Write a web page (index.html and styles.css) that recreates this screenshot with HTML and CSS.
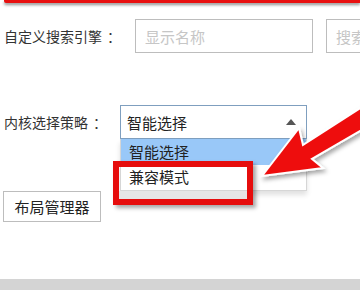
FILE: index.html
```html
<!DOCTYPE html>
<html lang="zh-CN">
<head>
  <meta charset="UTF-8">
  <title>内核选择</title>
  <link rel="stylesheet" href="styles.css">
</head>
<body>

  <div class="mark-top"></div>

  <div class="form">
    <div class="row">
      <label class="label label-engine">自定义搜索引擎<span class="colon">：</span></label>
      <input class="field field-name" type="text" placeholder="显示名称">
      <input class="field field-url" type="text" placeholder="搜索地址">
    </div>

    <div class="row row-kernel">
      <label class="label label-kernel">内核选择策略<span class="colon">：</span></label>
      <div class="select-wrap">
        <div class="select">
          <span>智能选择</span>
          <span class="caret"></span>
        </div>
        <ul class="options">
          <li class="active">智能选择</li>
          <li>兼容模式</li>
        </ul>
        <div class="mark-box"></div>
      </div>
    </div>

    <button class="btn">布局管理器</button>
  </div>

  <div class="footer-bar"></div>

  <svg class="mark-arrow" width="110" height="85" viewBox="0 0 110 85">
    <defs>
      <filter id="shadow" x="-20%" y="-20%" width="150%" height="150%">
        <feDropShadow dx="2" dy="3" stdDeviation="2" flood-color="#000" flood-opacity="0.35"/>
      </filter>
    </defs>
    <polygon points="7,76 44,28 48,45 110,5 110,28 57,59 68,68"
             fill="#ee1111" stroke="#fff" stroke-width="2" stroke-linejoin="miter" filter="url(#shadow)"/>
  </svg>

</body>
</html>
```

FILE: styles.css
```css
html, body {
  margin: 0;
  padding: 0;
  background: #fff;
  color: #333;
  font-family: "Noto Sans CJK SC", "Noto Sans", sans-serif;
}

body {
  position: relative;
  width: 360px;
  height: 290px;
  overflow: hidden;
  display: flex;
  flex-direction: column;
}

.mark-top {
  height: 3px;
  margin-left: 4px;
  background: #e81010;
  box-shadow: 0 2px 3px rgba(0, 0, 0, 0.45);
  border-radius: 0 0 0 2px;
}

.form {
  padding-left: 4px;
}

.row {
  display: flex;
  align-items: center;
  margin-top: 16px;
  white-space: nowrap;
}

.row-kernel {
  margin-top: 52px;
}

.label {
  flex: none;
  font-size: 14px;
  line-height: 20px;
  color: #333;
}

.colon {
  margin-left: 5px;
}

.label-engine { width: 131px; }
.label-kernel { width: 116px; }

.field {
  flex: none;
  box-sizing: border-box;
  height: 34px;
  margin: 0;
  padding: 0 9px;
  border: 1px solid #bdbdbd;
  font-family: inherit;
  font-size: 15px;
  color: #333;
  outline: none;
}

.field::placeholder {
  color: #c6c6c6;
}

.field-name { width: 178px; }
.field-url  { width: 100px; margin-left: 13px; }

.select-wrap {
  position: relative;
  flex: none;
  width: 187px;
}

.select {
  box-sizing: border-box;
  height: 34px;
  display: flex;
  align-items: center;
  padding-left: 6px;
  border: 1px solid #7f9fbf;
  font-size: 15px;
  color: #222;
}

.caret {
  margin-left: auto;
  margin-right: 10px;
  width: 0;
  height: 0;
  border-left: 5px solid transparent;
  border-right: 5px solid transparent;
  border-bottom: 6px solid #555;
}

.options {
  position: absolute;
  top: 34px;
  left: 0;
  width: 187px;
  box-sizing: border-box;
  margin: 0;
  padding: 0;
  list-style: none;
  background: #fff;
  border: 1px solid #d6d6d6;
  border-top: none;
  box-shadow: 0 4px 5px rgba(0, 0, 0, 0.12);
}

.options li {
  height: 26px;
  line-height: 26px;
  padding-left: 8px;
  font-size: 15px;
  color: #222;
}

.options li + li {
  height: 25px;
  line-height: 24px;
}

.options li.active {
  background: #99c8f8;
}

.mark-box {
  position: absolute;
  left: -7px;
  top: 56px;
  width: 140px;
  height: 44px;
  box-sizing: border-box;
  border: 6px solid #e60d0d;
  box-shadow: 3px 3px 4px rgba(0, 0, 0, 0.35), inset 0 -8px 0 #e6e6e6;
}

.btn {
  display: block;
  margin: 52px 0 0 -1px;
  width: 98px;
  height: 31px;
  padding: 0;
  background: #fff;
  border: 1px solid #bdbdbd;
  font-family: inherit;
  font-size: 15px;
  color: #222;
}

.footer-bar {
  margin-top: auto;
  height: 11px;
  background: #d4d4d4;
}

.mark-arrow {
  position: absolute;
  left: 255px;
  top: 100px;
}
```
